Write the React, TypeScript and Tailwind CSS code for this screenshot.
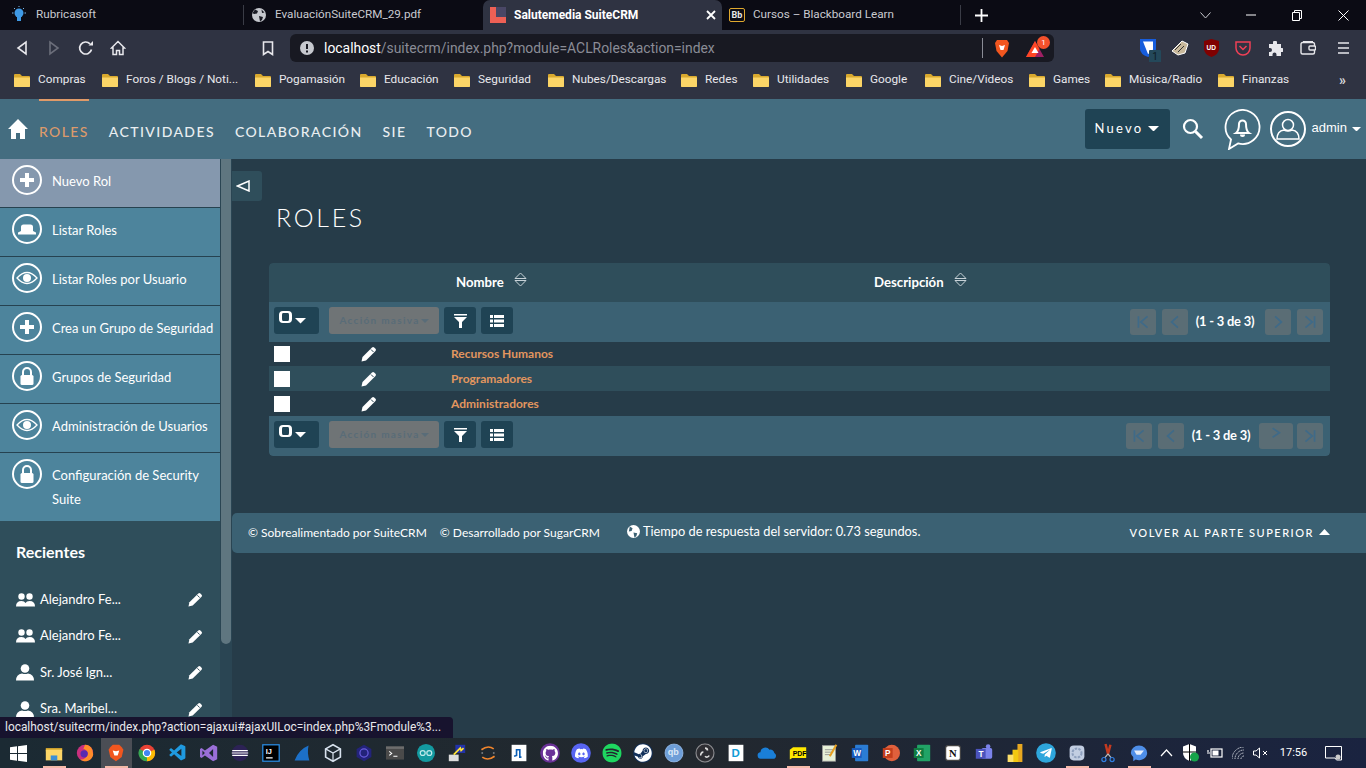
import React from "react";
import { FaGithub, FaDiscord, FaSpotify, FaSteam, FaTelegramPlane } from "react-icons/fa";
import { VscVscode } from "react-icons/vsc";

const lato = "font-['Lato',sans-serif]";
const ui = "font-['Roboto',sans-serif]";

const Folder = () => (
  <svg width="16" height="14" viewBox="0 0 16 14" className="flex-none">
    <path d="M0 2a1 1 0 0 1 1-1h5l2 2h7a1 1 0 0 1 1 1v9a1 1 0 0 1-1 1H1a1 1 0 0 1-1-1z" fill="#d9a92e" />
    <path d="M0 4.500h16V13a1 1 0 0 1-1 1H1a1 1 0 0 1-1-1z" fill="#fbd567" />
  </svg>
);

const Pencil = ({ size = 16 }: { size?: number }) => (
  <svg width={size} height={size} viewBox="0 0 16 16" className="flex-none">
    <path d="M0.500 15.500l1-4.500L11 1.500a1.600 1.600 0 0 1 2.200 0l1.300 1.300a1.600 1.600 0 0 1 0 2.200L5 14.500z" fill="#fff" />
    <path d="M10 3.500l2.500 2.500" stroke="#2b4654" strokeWidth="1" />
  </svg>
);

const Circle = ({ children }: { children: React.ReactNode }) => (
  <div className="w-[30px] h-[30px] rounded-full border-2 border-white flex-none flex items-center justify-center">{children}</div>
);

const Plus = () => (
  <svg width="16" height="16" viewBox="0 0 16 16"><path d="M6 1h4v5h5v4h-5v5H6v-5H1V6h5z" fill="#fff" /></svg>
);
const Hat = () => (
  <svg width="20" height="11" viewBox="0 0 20 11"><path d="M4 7V3q0-2.500 2.500-2.500h7Q16 .5 16 3v4l3 1.500v2H1v-2z" fill="#fff" /></svg>
);
const Eye = () => (
  <svg width="22" height="14" viewBox="0 0 22 14"><path d="M1 7q10-11 20 0q-10 11-20 0z" fill="none" stroke="#fff" strokeWidth="1.300" /><circle cx="11" cy="7" r="4" fill="#fff" /></svg>
);
const Lock = () => (
  <svg width="16" height="19" viewBox="0 0 16 19"><path d="M4 8V5a4 4 0 0 1 8 0v3" fill="none" stroke="#fff" strokeWidth="2" /><rect x="1.500" y="8" width="13" height="10" rx="1.500" fill="#fff" /></svg>
);

const sideItems: { icon: React.ReactNode; label: string[]; active?: boolean }[] = [
  { icon: <Plus />, label: ["Nuevo Rol"], active: true },
  { icon: <Hat />, label: ["Listar Roles"] },
  { icon: <Eye />, label: ["Listar Roles por Usuario"] },
  { icon: <Plus />, label: ["Crea un Grupo de Seguridad"] },
  { icon: <Lock />, label: ["Grupos de Seguridad"] },
  { icon: <Eye />, label: ["Administración de Usuarios"] },
  { icon: <Lock />, label: ["Configuración de Security", "Suite"] },
];

const Group = () => (
  <svg width="19" height="14" viewBox="0 0 19 14" className="flex-none">
    <circle cx="5.500" cy="3.500" r="3.200" fill="#fff" /><circle cx="13.500" cy="3.500" r="3.200" fill="#fff" />
    <path d="M0 13.500q0-5.500 5.500-5.500q3 0 4 2q1-2 4-2q5.500 0 5.500 5.500z" fill="#fff" />
  </svg>
);
const Person = () => (
  <svg width="18" height="17" viewBox="0 0 18 17" className="flex-none">
    <circle cx="9" cy="4.500" r="4.300" fill="#fff" /><path d="M0 16.500q0-6 6-7q3 1 6 0q6 1 6 7z" fill="#fff" />
  </svg>
);

const recents = [
  { i: <Group />, t: "Alejandro Fe...", h: "h-[37px]" },
  { i: <Group />, t: "Alejandro Fe...", h: "h-[36px]" },
  { i: <Person />, t: "Sr. José Ign...", h: "h-[37px]" },
  { i: <Person />, t: "Sra. Maribel...", h: "h-[36px]" },
];

const Caret = ({ w = 10, c = "#fff" }: { w?: number; c?: string }) => (
  <svg width={w} height={w / 2} viewBox="0 0 10 5" className="flex-none"><path d="M0 0h10L5 5z" fill={c} /></svg>
);

const Sort = () => (
  <svg width="13" height="15" viewBox="0 0 13 15"><path d="M1 6.500L6.500 1 12 6.500zM1 8.500L6.500 14 12 8.500z" fill="none" stroke="#c8d2d8" strokeWidth="1" /></svg>
);

const DarkBtn = ({ children, w }: { children: React.ReactNode; w: string }) => (
  <div className={`${w} h-[27px] bg-[#1f4354] rounded-[3px] flex items-center justify-center flex-none`}>{children}</div>
);
const Filter = () => (
  <svg width="13" height="14" viewBox="0 0 13 14"><path d="M0 0h13v1.500H0zM0 3h13L8 8v6H5V8z" fill="#fff" /></svg>
);
const ListI = () => (
  <svg width="14" height="12" viewBox="0 0 14 12"><path d="M0 0h3v3H0zM4 0h10v3H4zM0 4.500h3v3H0zM4 4.500h10v3H4zM0 9h3v3H0zM4 9h10v3H4z" fill="#fff" /></svg>
);

const PageBtn = ({ d, w = "w-[26px]", up }: { d: string; w?: string; up?: boolean }) => (
  <div className={`${w} h-[26px] rounded-[3px] bg-[#5a6d75] flex ${up ? "items-start pt-1" : "items-center"} justify-center flex-none`}>
    <svg width="16" height="16" viewBox="0 0 14 14"><path d={d} fill="none" stroke="#3f6a88" strokeWidth="1.500" /></svg>
  </div>
);

const ListBar = ({ bottom }: { bottom?: boolean }) => (
  <div className={`h-10 bg-[#3b6173] flex items-center pl-[5px] pr-[7px] ${bottom ? "rounded-b-[4px]" : ""}`}>
    <div className="flex items-center -mt-[3px] flex-none">
      <div className="w-[45px] h-[27px] bg-[#1f4354] rounded-[3px] flex items-start pl-[5px] pt-[4px] flex-none">
        <span className="w-[13px] h-[12px] border-x-[3px] border-y-2 border-white rounded-[4px] flex-none" />
        <span className="ml-[3px] mt-[7px] flex"><Caret w={11} /></span>
      </div>
      <div className={`${lato} ml-[10px] w-[110px] h-[27px] bg-[#6f7476] rounded-[3px] flex items-center justify-center flex-none text-[10px] font-bold tracking-[1.300px] text-[#596c78] gap-[1px]`}>
        Acción masiva<Caret w={8} c="#596c78" />
      </div>
      <div className="ml-[5px]"><DarkBtn w="w-8"><Filter /></DarkBtn></div>
      <div className="ml-[5px]"><DarkBtn w="w-8"><ListI /></DarkBtn></div>
    </div>
    <div className="flex-1" />
    <div className={`flex items-center ${lato}`}>
      <PageBtn d="M3 2v10M11 2L5 7l6 5" />
      <span className="ml-[6px]"><PageBtn d="M9.500 2L4 7l5.500 5" /></span>
      <span className={`${bottom ? "ml-[7px] mr-[8px]" : "ml-[7px] mr-[10px]"} w-[60px] text-center text-[12.900px] font-bold text-white whitespace-nowrap tracking-[-0.2px]`}>(1 - 3 de 3)</span>
      {bottom ? <PageBtn w="w-[34px]" up d="M4 1l6 4-6 4" /> : <PageBtn d="M4.500 2L10 7l-5.500 5" />}
      <span className={bottom ? "ml-[4px]" : "ml-[6px]"}><PageBtn d="M11 2v10M3 2l6 5-6 5" /></span>
    </div>
  </div>
);

const Row = ({ name, alt, h = "h-[25px]" }: { name: string; alt?: boolean; h?: string }) => (
  <div className={`${h} flex items-center pl-[5px] ${alt ? "bg-[#2f4e5b]" : ""}`}>
    <div className="w-4 h-4 bg-white flex-none" />
    <div className="ml-[71px] flex-none"><Pencil /></div>
    <a className={`${lato} ml-[74px] text-[12px] font-bold text-[#e2965f]`}>{name}</a>
  </div>
);

/* browser chrome icons */
const Back = () => <svg width="14" height="16" viewBox="0 0 14 16"><path d="M11 2v12L3 8z" fill="none" stroke="#e8e8ec" strokeWidth="1.600" /></svg>;
const Fwd = () => <svg width="14" height="16" viewBox="0 0 14 16"><path d="M3 2v12l8-6z" fill="none" stroke="#6b6e7a" strokeWidth="1.600" /></svg>;
const Reload = () => <svg width="16" height="16" viewBox="0 0 16 16"><path d="M13.500 9.500A6 6 0 1 1 12 3.800" fill="none" stroke="#e8e8ec" strokeWidth="1.700" /><path d="M10.500 5.500h4.500V1z" fill="#e8e8ec" /></svg>;
const HomeI = () => <svg width="16" height="16" viewBox="0 0 16 16"><path d="M8 1.500L1.500 8H3v6.500h3.500v-4h3v4H13V8h1.500z" fill="none" stroke="#e8e8ec" strokeWidth="1.500" /></svg>;

const Globe = () => (
  <svg width="14" height="14" viewBox="0 0 14 14"><circle cx="7" cy="7" r="7" fill="#c6c8ce" /><path d="M3 1.500l3 1.500-1 2.500-3 .5-1.500-1zM7 8l4 1-1 3-2 1.500zM9.500 1.500l3 3-2.500.5z" fill="#1a1b24" /></svg>
);

const Sep = () => <div className="w-px h-[20px] bg-[#3a3c46] flex-none" />;

const bookmarks: [string, string][] = [
  ["Compras", "w-[48px]"], ["Foros / Blogs / Noti...", "w-[113px]"], ["Pogamasión", "w-[65px]"], ["Educación", "w-[54px]"],
  ["Seguridad", "w-[54px]"], ["Nubes/Descargas", "w-[93px]"], ["Redes", "w-[32px]"], ["Utilidades", "w-[53px]"],
  ["Google", "w-[39px]"], ["Cine/Videos", "w-[64px]"], ["Games", "w-[36px]"], ["Música/Radio", "w-[73px]"], ["Finanzas", "w-[45px]"],
];

/* taskbar icons */
const T = ({ children, vb = "0 0 24 24", s = 24 }: { children: React.ReactNode; vb?: string; s?: number }) => (
  <svg width={s} height={s} viewBox={vb}>{children}</svg>
);
const Disc = ({ bg, children }: { bg: string; children: React.ReactNode }) => (
  <div className={`w-[24px] h-[24px] rounded-full flex items-center justify-center ${bg}`}>{children}</div>
);
const taskIcons: { n: React.ReactNode; u?: boolean; bg?: boolean }[] = [
  { u: true, n: <T><path d="M2 6h20v4H2z" fill="#d9a92e" /><path d="M2 8h20v13H2z" fill="#fcd667" /><path d="M8 15h8v6H8z" fill="#3b8fd6" /></T> },
  { n: <T><circle cx="12" cy="12" r="10" fill="#c9307e" /><path d="M12 2a10 10 0 0 1 9 6l1 6a10 10 0 0 1-16 6a8 8 0 0 0 9-8c0-3-3-5-5-5z" fill="#ff8c2a" /><circle cx="11" cy="13" r="4.500" fill="#5a2ab0" /></T> },
  { u: true, bg: true, n: <T><path d="M5 5l3-3h8l3 3 2 3-2 9-7 5-7-5-2-9z" fill="#f1561f" /><path d="M8 9l4 1 4-1-2 6h-4z" fill="#fff" /></T> },
  { n: <T><circle cx="12" cy="12" r="10" fill="#e94235" /><path d="M12 12L21 8a10 10 0 0 1-9 14z" fill="#fbbc04" /><path d="M12 12L12 22A10 10 0 0 1 3 7z" fill="#34a853" /><circle cx="12" cy="12" r="4.500" fill="#4285f4" stroke="#fff" strokeWidth="1.500" /></T> },
  { n: <VscVscode size={24} color="#1f9ae0" /> },
  { n: <T><path d="M17 2l5 2.500v15L17 22 7 15l-4 3-2-1V7l2-1 4 3zM17 7l-5 5 5 5zM4 9v6l3-3z" fill="#9a6fd8" /></T> },
  { n: <T><circle cx="12" cy="12" r="10" fill="#2c2255" /><path d="M2.500 9h19M2 12h20M2.500 15h19" stroke="#fff" strokeWidth="1.500" /></T> },
  { n: <T><rect x="2" y="2" width="20" height="20" fill="#000" stroke="#2a8fe8" strokeWidth="1.500" /><text x="5.500" y="13" fill="#fff" fontSize="9" fontWeight="700" fontFamily="Liberation Sans">IJ</text><path d="M6 18h8" stroke="#fff" strokeWidth="1.500" /></T> },
  { n: <T><path d="M3 21Q8 8 20 3q-2 9 1 18z" fill="#1c70c8" /></T> },
  { n: <T><path d="M12 2l9 5v10l-9 5-9-5V7z" fill="none" stroke="#d8e2ee" strokeWidth="2" /><path d="M3 7l9 5 9-5M12 12v10" stroke="#d8e2ee" strokeWidth="1.500" fill="none" /></T> },
  { n: <T><path d="M12 2l9 5v10l-9 5-9-5V7z" fill="#23237a" /><circle cx="12" cy="12" r="5" fill="none" stroke="#6a5ce0" strokeWidth="1.500" /></T> },
  { n: <T><rect x="1" y="4" width="22" height="16" fill="#4a4a4a" /><rect x="1" y="4" width="22" height="3" fill="#6d6d6d" /><path d="M5 10l3 2.500L5 15M10 16h5" stroke="#fff" strokeWidth="1.300" fill="none" /></T> },
  { n: <T><circle cx="12" cy="12" r="11" fill="#139aa0" /><path d="M5 12a3 3 0 0 1 6 0 3 3 0 0 1-6 0zM13 12a3 3 0 0 1 6 0 3 3 0 0 1-6 0z" fill="none" stroke="#bfe9ea" strokeWidth="1.500" /></T> },
  { n: <T><rect x="2" y="14" width="12" height="8" fill="#ddd" /><rect x="10" y="2" width="12" height="10" fill="#2232a8" /><path d="M8 14l8-8 1 3 3-3" stroke="#ffe333" strokeWidth="2" fill="none" /></T> },
  { n: <T><path d="M4 8q8-6 15-1M20 16q-8 6-15 1" fill="none" stroke="#f2852c" strokeWidth="2" /><path d="M4 12h2M18 12h2" stroke="#bbb" strokeWidth="1.500" /></T> },
  { n: <T><rect x="3" y="2" width="18" height="20" fill="#fff" /><path d="M6 16l3-1V8h4v9h2" stroke="#0b5fb5" strokeWidth="2" fill="none" /></T> },
  { n: <Disc bg="bg-[#6a3298]"><FaGithub size={19} color="#fff" /></Disc> },
  { n: <Disc bg="bg-[#5865f2]"><FaDiscord size={17} color="#fff" /></Disc> },
  { n: <FaSpotify size={24} color="#1ed760" /> },
  { n: <Disc bg="bg-[#12305a]"><FaSteam size={22} color="#fff" /></Disc> },
  { n: <T><circle cx="12" cy="12" r="11" fill="#6e9ed8" stroke="#9ac0ee" /><text x="4.500" y="15" fill="#dbe8f7" fontSize="11" fontWeight="700" fontFamily="Liberation Sans">qb</text></T> },
  { n: <T><circle cx="12" cy="12" r="11" fill="#2e2e33" stroke="#8a8a8e" strokeWidth="1.500" /><path d="M12 6a3 3 0 0 1 3 3M7 15a3 3 0 0 1 3-4M17 15a3 3 0 0 1-5 1" stroke="#ddd" strokeWidth="2" fill="none" /></T> },
  { n: <T><rect x="3" y="2" width="18" height="20" fill="#fff" /><text x="6.500" y="17" fill="#109bd6" fontSize="14" fontWeight="700" fontFamily="Liberation Sans">D</text></T> },
  { n: <T><path d="M5 19a4 4 0 0 1-1-8 6 6 0 0 1 11-3 5 5 0 0 1 6 4 4 4 0 0 1 0 7z" fill="#1a7fd8" /></T> },
  { u: true, n: <T><path d="M2 8l4-3h16v13H5l-3 2z" fill="#ffe800" /><text x="5.500" y="15.500" fill="#000" fontSize="8.500" fontWeight="700" fontFamily="Liberation Sans">PDF</text></T> },
  { n: <T><rect x="4" y="3" width="16" height="19" fill="#e8f2d8" stroke="#9a9a9a" /><path d="M7 8h10M7 11h10M7 14h8" stroke="#888" /><path d="M13 16L21 2" stroke="#e8a020" strokeWidth="2.500" /></T> },
  { n: <T><rect x="6" y="2" width="16" height="20" rx="1" fill="#2b7cd3" /><rect x="2" y="6" width="12" height="12" fill="#185abd" /><text x="3.800" y="15.500" fill="#fff" fontSize="10" fontWeight="700" fontFamily="Liberation Sans">W</text></T> },
  { n: <T><circle cx="13" cy="12" r="10" fill="#e0603c" /><rect x="2" y="6" width="12" height="12" fill="#c43e1c" /><text x="4.800" y="15.500" fill="#fff" fontSize="10" fontWeight="700" fontFamily="Liberation Sans">P</text></T> },
  { n: <T><rect x="6" y="2" width="16" height="20" rx="1" fill="#21a366" /><rect x="2" y="6" width="12" height="12" fill="#107c41" /><text x="4.800" y="15.500" fill="#fff" fontSize="10" fontWeight="700" fontFamily="Liberation Sans">X</text></T> },
  { n: <T><rect x="3" y="3" width="18" height="18" rx="3" fill="#fff" stroke="#444" strokeWidth="1.500" /><text x="7" y="17" fill="#111" fontSize="13" fontWeight="700" fontFamily="Liberation Serif">N</text></T> },
  { n: <T><rect x="9" y="6" width="13" height="13" rx="2" fill="#7b83eb" /><circle cx="17" cy="4" r="2.800" fill="#7b83eb" /><rect x="2" y="7" width="12" height="12" fill="#4b53bc" /><text x="5.300" y="16.500" fill="#fff" fontSize="10" fontWeight="700" fontFamily="Liberation Sans">T</text></T> },
  { n: <T><rect x="15" y="1" width="6" height="22" fill="#e8a820" /><rect x="9" y="8" width="7" height="15" fill="#f2c811" /><rect x="3" y="14" width="7" height="9" fill="#fde06a" /></T> },
  { n: <Disc bg="bg-[#2ea6dc]"><FaTelegramPlane size={16} color="#fff" /></Disc> },
  { u: true, n: <T><rect x="3" y="3" width="18" height="18" rx="5" fill="#c2cee2" /><circle cx="12" cy="12" r="5.500" fill="none" stroke="#8ea0be" strokeWidth="2.500" strokeDasharray="3 1.500" /></T> },
  { n: <T><path d="M9 1l3 12M15 2l-3 11" stroke="#c33a20" strokeWidth="3" /><path d="M12 13l-4 5M12 13l4 5" stroke="#bbb" strokeWidth="1.500" /><circle cx="7" cy="20" r="2.500" fill="none" stroke="#2f7de0" strokeWidth="1.500" /><circle cx="17" cy="20" r="2.500" fill="none" stroke="#2f7de0" strokeWidth="1.500" /></T> },
  { u: true, n: <T><path d="M2 12a10 9 0 0 1 20 0 10 9 0 0 1-14 8l-3 2v-5a9 9 0 0 1-3-5z" fill="#4e8ee8" /><path d="M6 9h12l-4 5H9z" fill="#e5eefb" /></T> },
];

export default function App() {
  return (
    <div className={`w-[1366px] h-screen overflow-hidden flex flex-col bg-[#263c49] ${lato}`}>
      {/* tab strip */}
      <div className={`${ui} h-[30px] flex-none bg-[#0b0b14] flex items-end text-[11.700px] text-[#c9cad0]`}>
        <div className="w-[243px] h-[30px] flex items-center pl-[11px] flex-none">
          <svg width="16" height="18" viewBox="0 0 16 18" className="flex-none">
            <circle cx="8" cy="7" r="4.500" fill="#3f9ae6" /><rect x="6" y="11" width="4" height="4" fill="#3f9ae6" />
            <path d="M1 7h1.500M13.500 7H15M3 2l1 1M13 2l-1 1M8 0v1" stroke="#7db9ea" strokeWidth="1" />
          </svg>
          <span className="ml-[9px]">Rubricasoft</span>
        </div>
        <div className="self-center"><Sep /></div>
        <div className="w-[239px] h-[30px] flex items-center pl-[8px] flex-none">
          <Globe />
          <span className="ml-[9px]">EvaluaciónSuiteCRM_29.pdf</span>
        </div>
        <div className="w-[239px] h-[30px] flex items-center pl-[7px] flex-none bg-[#2f3342] rounded-t-[7px] text-white text-[12px] font-bold">
          <svg width="16" height="16" viewBox="0 0 16 16" className="flex-none"><rect width="16" height="16" fill="#ee6055" /><rect x="6" width="10" height="10" fill="#4a4766" /></svg>
          <span className="ml-[8px] flex-1">Salutemedia SuiteCRM</span>
          <svg width="10" height="10" viewBox="0 0 10 10" className="mr-[6px]"><path d="M1 1l8 8M9 1l-8 8" stroke="#fff" strokeWidth="1.800" /></svg>
        </div>
        <div className="w-[238px] h-[30px] flex items-center pl-[7px] flex-none">
          <div className="w-[16px] h-[14px] border border-[#e0a92e] rounded-[2px] flex items-center justify-center text-[9px] font-bold text-[#e8e8e8] flex-none leading-none">Bb</div>
          <span className="ml-[8px]">Cursos – Blackboard Learn</span>
        </div>
        <div className="self-center"><Sep /></div>
        <div className="w-[41px] h-[30px] flex items-center justify-center flex-none">
          <svg width="13" height="13" viewBox="0 0 13 13"><path d="M6.500 0v13M0 6.500h13" stroke="#fff" strokeWidth="1.800" /></svg>
        </div>
        <div className="flex-1" />
        <div className="w-[46px] h-[30px] flex items-center justify-center"><svg width="11" height="7" viewBox="0 0 11 7"><path d="M.5.500l5 5.500 5-5.500" fill="none" stroke="#c9cad0" /></svg></div>
        <div className="w-[46px] h-[30px] flex items-center justify-center"><svg width="10" height="10" viewBox="0 0 10 10"><path d="M0 5h10" stroke="#fff" /></svg></div>
        <div className="w-[46px] h-[30px] flex items-center justify-center"><svg width="10" height="11" viewBox="0 0 10 11"><path d="M.5 2.500h7v8h-7zM2.500 2.500v-2h7v8h-2" fill="none" stroke="#fff" /></svg></div>
        <div className="w-[46px] h-[30px] flex items-center justify-center"><svg width="11" height="11" viewBox="0 0 11 11"><path d="M.5.500l10 10M10.500.500l-10 10" stroke="#fff" /></svg></div>
      </div>

      {/* toolbar */}
      <div className="h-[32px] flex-none bg-[#2f3342] flex items-center pt-[4px] relative">
        <div className="w-[32px] ml-[6px] flex justify-center"><Back /></div>
        <div className="w-[32px] flex justify-center"><Fwd /></div>
        <div className="w-[32px] flex justify-center"><Reload /></div>
        <div className="w-[32px] flex justify-center"><HomeI /></div>
        <div className="ml-[126px] w-[16px] flex justify-center">
          <svg width="12" height="15" viewBox="0 0 12 15"><path d="M1.500 1h9v12.500L6 10.500l-4.500 3z" fill="none" stroke="#e8e8ec" strokeWidth="1.600" /></svg>
        </div>
        <div className={`${ui} ml-[14px] w-[764px] h-[28px] self-end bg-[#181922] rounded-[6px] flex items-center pl-[10px] pr-0 text-[13.900px] flex-none`}>
          <svg width="14" height="14" viewBox="0 0 14 14" className="flex-none"><circle cx="7" cy="7" r="7" fill="#c6c8ce" /><path d="M7 3v5M7 9.500v2" stroke="#181922" strokeWidth="2" /></svg>
          <span className="ml-[10px] text-white">localhost</span>
          <span className="text-[#8a8c96]">/suitecrm/index.php?module=ACLRoles&amp;action=index</span>
          <div className="flex-1" />
          <div className="w-px h-[20px] bg-[#8a8c96]" />
          <div className="ml-[11px] w-[16px] flex-none">
            <svg width="16" height="19" viewBox="0 0 16 19"><path d="M3 1h10l2 3-1.500 8L8 18.500 2.500 12 1 4z" fill="#f1561f" /><path d="M5 6l3 1 3-1-1.500 5h-3z" fill="#fff" /></svg>
          </div>
          <div className="ml-[15px] mr-[3px] w-[26px] h-[22px] flex-none relative">
            <svg width="20" height="18" viewBox="0 0 20 18" className="mt-[3px]"><path d="M10 1l9 16H1z" fill="#9e1f63" /><path d="M10 1l4.500 8L10 17H1z" fill="#ff4724" /><path d="M10 7l3.500 6h-7z" fill="#fff" /></svg>
            <span className="absolute -top-[1px] left-[12px] w-[13px] h-[13px] rounded-full bg-[#f4512c] text-white text-[8px] leading-[13px] text-center">1</span>
          </div>
        </div>
        <div className="ml-[86px] w-[16px] h-[18px] relative flex-none">
          <svg width="16" height="18" viewBox="0 0 16 18"><path d="M0 0h16v10q0 5-8 8q-8-3-8-8z" fill="#175ddc" /><path d="M3 2.500h10V10q0 3-5 5z" fill="#fff" /></svg>
          <span className={`${ui} absolute left-[9px] top-[11px] w-[12px] h-[13px] bg-[#24485a] text-[#0d1c24] text-[10px] leading-[13px] text-center rounded-[1px]`}>1</span>
        </div>
        <div className="ml-[12px] w-[24px] flex justify-center">
          <svg width="18" height="16" viewBox="0 0 18 16"><path d="M1 11L11 1l6 3-3 9-7 2z" fill="#c8b89a" stroke="#fff" /><path d="M4 10l6-6M7 12l6-6" stroke="#333" /></svg>
        </div>
        <div className="ml-[7px] w-[24px] flex justify-center">
          <svg width="15" height="18" viewBox="0 0 15 18"><path d="M0 2l7.500-2L15 2v8q0 5-7.500 8Q0 15 0 10z" fill="#800000" /><text x="2.500" y="10.500" fill="#fff" fontSize="6.500" fontWeight="700" fontFamily="Liberation Sans">UD</text></svg>
        </div>
        <div className="ml-[8px] w-[24px] flex justify-center">
          <svg width="16" height="15" viewBox="0 0 16 15"><path d="M1 1h14v6a7 7 0 0 1-14 0z" fill="none" stroke="#ef4056" strokeWidth="1.500" /><path d="M4.500 5L8 8.500 11.500 5" fill="none" stroke="#ef4056" strokeWidth="1.500" /></svg>
        </div>
        <div className="ml-[8px] w-[24px] flex justify-center">
          <svg width="15" height="15" viewBox="0 0 15 15"><path d="M5 1.500a2 2 0 0 1 4 0V3h4v4h1a2 2 0 0 1 0 4h-1v4H8.500v-1.500a2 2 0 0 0-4 0V15H1v-4h1a2 2 0 0 0 0-4H1V3h4z" fill="#e8e8ec" /></svg>
        </div>
        <div className="ml-[9px] w-[24px] flex justify-center">
          <svg width="16" height="14" viewBox="0 0 16 14"><path d="M3 .800h10M14.500 5V3a1.500 1.500 0 0 0-1.500-1.500H2.500A1.500 1.500 0 0 0 1 3v8.500A1.500 1.500 0 0 0 2.500 13H13a1.500 1.500 0 0 0 1.500-1.500V9" fill="none" stroke="#e8e8ec" strokeWidth="1.400" /><rect x="9" y="5" width="6.500" height="4" rx="1" fill="none" stroke="#e8e8ec" strokeWidth="1.400" /></svg>
        </div>
        <div className="ml-[11px] w-[24px] flex justify-center">
          <svg width="11" height="12" viewBox="0 0 11 12"><path d="M0 1h11M0 6h11M0 11h11" stroke="#e8e8ec" strokeWidth="1.700" /></svg>
        </div>
      </div>

      {/* bookmarks */}
      <div className={`${ui} h-[37px] flex-none bg-[#2f3342] flex items-center pl-[14px] pb-[1px] text-[11.800px] text-[#e8e8ec] relative`}>
        {bookmarks.map(([b, w]) => (
          <div key={b} className="flex items-center mr-[16px] flex-none">
            <Folder />
            <span className={`ml-[8px] ${w} whitespace-nowrap`}>{b}</span>
          </div>
        ))}
        <span className="ml-[36px] text-[14px] text-[#d8d8dc] font-bold">»</span>
      </div>

      {/* body */}
      <div className="flex-1 min-h-0 relative flex flex-col overflow-hidden">
        {/* nav */}
        <div className="h-[60px] flex-none bg-[#446d80] flex items-center relative">
          <div className="absolute left-[39px] top-0 w-[50px] h-[2px] bg-[#e09a68]" />
          <div className="ml-[8px] w-[20px] flex-none">
            <svg width="20" height="20" viewBox="0 0 20 20"><path d="M10 0l10 10h-3v10h-5v-6H8v6H3V10H0z" fill="#fff" /></svg>
          </div>
          <nav className="ml-[11px] mt-[4px] flex gap-[20px] text-[14px] font-medium tracking-[1.400px] text-[#e9eef1]">
            <span className="text-[#dc9a6b]">ROLES</span>
            <span>ACTIVIDADES</span>
            <span>COLABORACIÓN</span>
            <span>SIE</span>
            <span>TODO</span>
          </nav>
          <div className="flex-1" />
          <div className="w-[85px] h-[40px] bg-[#1f4354] rounded-[3px] flex items-center pl-[10px] text-[13px] tracking-[2.200px] text-white flex-none">
            <span className="-mt-[1px]">Nuevo</span>
            <span className="ml-[5px] -mt-[1px]"><Caret w={11} /></span>
          </div>
          <div className="ml-[12px] w-[22px] flex-none">
            <svg width="22" height="22" viewBox="0 0 22 22"><circle cx="8.500" cy="8.500" r="6.500" fill="none" stroke="#fff" strokeWidth="2.200" /><path d="M13.500 13.500L20 20" stroke="#fff" strokeWidth="3" /></svg>
          </div>
          <div className="ml-[20px] w-[37px] flex-none">
            <svg width="37" height="41" viewBox="0 0 37 41">
              <path d="M14 34.400A17 17 0 1 0 7 30.500L5 40z" fill="none" stroke="#fff" strokeWidth="1.800" />
              <path d="M12 24q3-2 3-9a3.500 3.500 0 0 1 7 0q0 7 3 9z" fill="none" stroke="#fff" strokeWidth="2" />
              <path d="M16 25.500a2.500 2.500 0 0 0 5 0z" fill="#fff" />
            </svg>
          </div>
          <div className="ml-[9px] w-[36px] h-[36px] rounded-full border-2 border-white flex-none flex items-center justify-center">
            <svg width="24" height="22" viewBox="0 0 24 22"><circle cx="12" cy="7" r="5.500" fill="none" stroke="#fff" strokeWidth="1.500" /><path d="M1 21q0-8 7-9q4 2 8 0q7 1 7 9z" fill="none" stroke="#fff" strokeWidth="1.500" /></svg>
          </div>
          <span className="ml-[6px] -mt-[3px] text-[13px] font-['Liberation_Sans',sans-serif] text-white">admin</span>
          <span className="ml-[5px] mr-[5px] flex"><Caret w={9} /></span>
        </div>

        <div className="flex-1 min-h-0 flex">
          {/* sidebar */}
          <aside className="w-[220px] flex-none bg-[#2f4e5b] overflow-hidden">
            {sideItems.map((s) => (
              <div key={s.label[0]} className={`flex items-start pt-[6px] pl-[12px] border-b border-[#264250] ${s.active ? "bg-[#8598ae]" : "bg-[#4d849c]"} ${s.label.length > 1 ? "h-[68px] border-b-0" : "h-[49px]"}`}>
                <Circle>{s.icon}</Circle>
                <div className="ml-[10px] text-[13px] leading-[24px] text-white pt-[4px] whitespace-nowrap">
                  {s.label.map((l) => <div key={l}>{l}</div>)}
                </div>
              </div>
            ))}
            <div className="pl-[16px] pt-[21px] text-[16px] leading-[20px] font-bold text-white">Recientes</div>
            <div className="mt-[19px]">
              {recents.map((r, i) => (
                <div key={i} className={`${r.h} flex items-center pl-[16px] pr-[17px]`}>
                  {r.i}
                  <span className={`${i > 1 ? "ml-[6px]" : "ml-[5px]"} flex-1 text-[13px] text-white`}>{r.t}</span>
                  <Pencil size={15} />
                </div>
              ))}
            </div>
          </aside>
          {/* scrollbar */}
          <div className="w-[12px] flex-none bg-[#2a4553] pl-[1px] pr-[1px]">
            <div className="w-[10px] h-[485px] bg-[#5f7680] rounded-b-[5px]" />
          </div>

          {/* main */}
          <main className="flex-1 min-w-0">
            <div className="mt-[12px] w-[30px] h-[30px] bg-[#2f4e5b] rounded-r-[3px] flex items-center pl-[4px]">
              <svg width="14" height="12" viewBox="0 0 14 12"><path d="M13 1v10L1.500 6z" fill="none" stroke="#fff" strokeWidth="1.500" /></svg>
            </div>
            <h1 className="ml-[44px] -mt-[2px] h-[36px] leading-[36px] text-[25px] font-light tracking-[2.700px] text-white">ROLES</h1>
            <div className="ml-[37px] mr-[36px] mt-[28px] rounded-[4px] overflow-hidden">
              <div className="h-[39px] bg-[#2f4e5b] flex items-center text-[13.200px] font-bold text-white rounded-t-[4px]">
                <span className="ml-[187px] w-[58px]">Nombre</span>
                <span className="-mt-[6px]"><Sort /></span>
                <span className="ml-[347px] w-[79px] whitespace-nowrap">Descripción</span>
                <span className="ml-[1px] -mt-[6px]"><Sort /></span>
              </div>
              <ListBar />
              <Row name="Recursos Humanos" h="h-[24px]" />
              <Row name="Programadores" alt />
              <Row name="Administradores" />
              <ListBar bottom />
            </div>
            <div className="mt-[57px] h-[40px] bg-[#3b6173] rounded-l-[5px] flex items-center pl-[16px] pr-[36px] text-white">
              <span className="text-[12px] whitespace-nowrap -mt-[1px]">© Sobrealimentado por SuiteCRM</span>
              <span className="ml-[13px] text-[12px] whitespace-nowrap -mt-[1px]">© Desarrollado por SugarCRM</span>
              <svg width="13" height="13" viewBox="0 0 14 14" className="ml-[27px] flex-none -mt-[3px]"><circle cx="7" cy="7" r="7" fill="#fff" /><path d="M3 1.500l3 2-1 3-3 .5zM7 8l4 1-1 3-2 1.500z" fill="#3b6173" /></svg>
              <span className="ml-[3px] text-[12.800px] whitespace-nowrap -mt-[3px]">Tiempo de respuesta del servidor: 0.73 segundos.</span>
              <div className="flex-1" />
              <span className="text-[11px] font-medium tracking-[1.500px] whitespace-nowrap">VOLVER AL PARTE SUPERIOR</span>
              <svg width="11" height="6" viewBox="0 0 11 6" className="ml-[5px] flex-none -mt-[2px]"><path d="M0 6h11L5.500 0z" fill="#fff" /></svg>
            </div>
          </main>
        </div>

        {/* status bubble */}
        <div className={`${ui} absolute left-0 bottom-0 w-[453px] h-[21px] bg-[#17132e] rounded-tr-[4px] pl-[5px] text-[11.900px] leading-[21px] text-[#e8e8ec] whitespace-nowrap`}>
          localhost/suitecrm/index.php?action=ajaxui#ajaxUILoc=index.php%3Fmodule%3...
        </div>
      </div>

      {/* taskbar */}
      <div className="h-[30px] flex-none bg-gradient-to-r from-[#1b2a33] via-[#22282e] to-[#1a2340] flex items-center text-white">
        <div className="w-[38.500px] flex-none flex pl-[10px]">
          <svg width="17" height="17" viewBox="0 0 17 17"><path d="M0 2.300L7 1.300v6.800H0zM8 1.200L17 0v8.100H8zM0 9h7v6.800l-7-1zM8 9h9v8l-9-1.200z" fill="#fff" /></svg>
        </div>
        {taskIcons.map((t, i) => (
          <div key={i} className={`w-[31px] h-[30px] flex-none flex items-center justify-center relative ${t.bg ? "bg-[#4b4e55]" : ""}`}>
            <span className="scale-[0.82] flex">{t.n}</span>
            {t.u && <div className="absolute bottom-0 left-[4px] right-[4px] h-[2px] bg-[#f4b9a8]" />}
          </div>
        ))}
        <div className="w-[24px] flex-none flex justify-center">
          <svg width="13" height="8" viewBox="0 0 13 8"><path d="M1 7l5.500-6L12 7" fill="none" stroke="#fff" strokeWidth="1.200" /></svg>
        </div>
        <div className="w-[24px] flex-none flex justify-center">
          <svg width="16" height="18" viewBox="0 0 16 18"><path d="M0 2.500L6.500 0 13 2.500V9q0 5-6.500 8Q0 14 0 9z" fill="#fff" /><path d="M6.500 0v17M0 8h13" stroke="#000" /><circle cx="11.500" cy="13" r="4.500" fill="#16a34a" /></svg>
        </div>
        <div className="w-[24px] flex-none flex justify-center">
          <svg width="16" height="12" viewBox="0 0 16 12"><rect x="4" y="2" width="11" height="8" fill="none" stroke="#fff" strokeWidth="1.200" /><rect x="5.500" y="3.500" width="6" height="5" fill="#fff" /><path d="M0 6h3M1 3v2" stroke="#fff" strokeWidth="1.200" /></svg>
        </div>
        <div className="w-[24px] flex-none flex justify-center">
          <svg width="13" height="13" viewBox="0 0 13 13"><path d="M0 12A12 12 0 0 1 12 0M3 12a9 9 0 0 1 9-9M6 12a6 6 0 0 1 6-6M9 12a3 3 0 0 1 3-3" fill="none" stroke="#dfe3ea" strokeWidth="0.900" strokeDasharray="1.200 .6" /></svg>
        </div>
        <div className="w-[20px] flex-none flex justify-center">
          <svg width="16" height="12" viewBox="0 0 16 12"><path d="M.5 4v4h2.500l3.500 3V1L3 4z" fill="none" stroke="#fff" /><path d="M10 4l4 4M14 4l-4 4" stroke="#fff" /></svg>
        </div>
        <span className={`${ui} ml-[4px] w-[38px] flex-none text-[11px] text-center`}>17:56</span>
        <div className="ml-[12px] w-[20px] flex-none">
          <svg width="17" height="15" viewBox="0 0 17 15"><path d="M.5.500h16v13.500h-5l-1.500 -2H.5z" fill="none" stroke="#fff" /><circle cx="13" cy="11" r="2.500" fill="#ccc" /></svg>
        </div>
      </div>
    </div>
  );
}
